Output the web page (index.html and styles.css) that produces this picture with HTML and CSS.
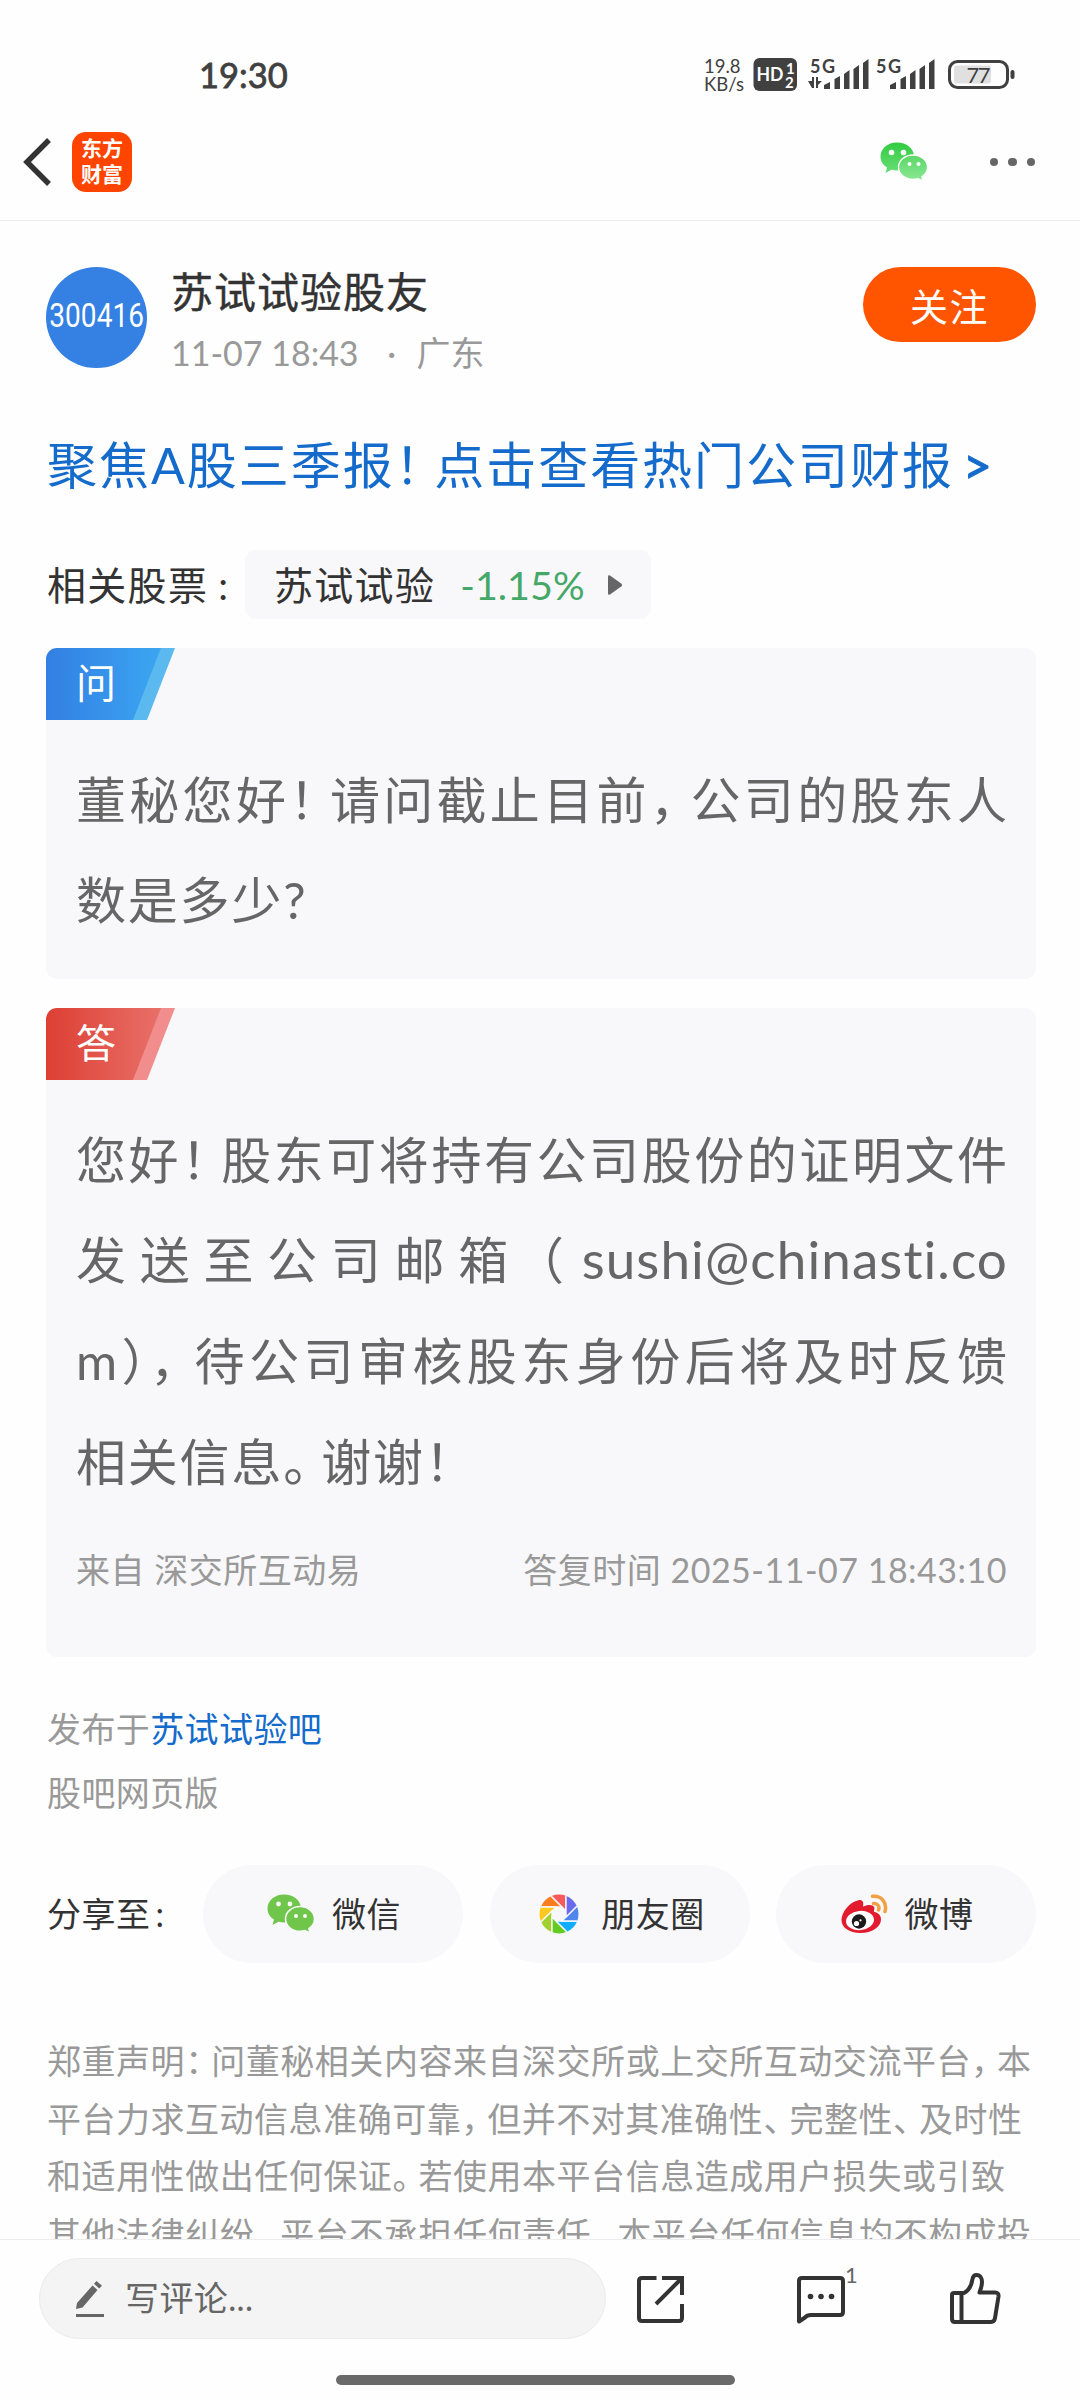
FILE: index.html
```html
<!DOCTYPE html>
<html lang="zh-CN">
<head>
    <meta charset="UTF-8">
    <meta name="viewport" content="width=device-width, initial-scale=1.0">
    <title>苏试试验股友</title>
    <link rel="stylesheet" href="styles.css">
</head>
<body>
    <div class="status-bar">
        <span class="time">19:30</span>
        <div class="signals">
            <div class="speed"><span>19.8</span><span>KB/s</span></div>
            <svg width="264" height="36" viewBox="48 0 264 36">
                <g fill="#404040">
                    <rect x="49.500" y="1" width="43.500" height="33" rx="6"/>
                    <text x="106" y="16" font-size="18" font-weight="bold" textLength="25">5G</text>
                    <path d="M104 24h4v-4h2v11h-2zM112 20h2v4h4l-4 4v3h-2z"/>
                    <path d="M120 32v-4l6-3v7zM130.500 32V22l5.500-3v13zM140 32V17l5.500-4v19zM149.500 32V12l5.500-4v24zM159 32V6l5.500-4v30z"/>
                    <text x="172" y="16" font-size="18" font-weight="bold" textLength="25">5G</text>
                    <path d="M186 32v-4l6-3v7zM196.500 32V22l5.500-3v13zM206 32V17l5.500-4v19zM215.500 32V12l5.500-4v24zM225 32V6l5.500-4v30z"/>
                    <rect x="306.500" y="13" width="4" height="9" rx="2"/>
                </g>
                <g fill="#fff" font-weight="bold">
                    <text x="52.500" y="24" font-size="19" textLength="27" lengthAdjust="spacingAndGlyphs">HD</text>
                    <text x="82" y="16.500" font-size="15">1</text>
                    <text x="81" y="31" font-size="15">2</text>
                </g>
                <rect x="245.500" y="4.500" width="58" height="26" rx="8" fill="none" stroke="#404040" stroke-width="3"/>
                <rect x="250" y="8.500" width="37" height="18" rx="3" fill="#e0e0e0"/>
                <text x="262.500" y="25.500" font-size="22" fill="#404040" textLength="24">77</text>
            </svg>
        </div>
    </div>

    <div class="nav-bar">
        <svg class="back" width="32" height="52" viewBox="0 0 32 52">
            <path d="M27 4L5 26L27 48" fill="none" stroke="#333" stroke-width="5.500"/>
        </svg>
        <div class="logo"><span>东方</span><span>财富</span></div>
        <svg class="nav-wechat" width="48" height="40" viewBox="0 0 48 40">
            <defs>
                <linearGradient id="green1" x1="0" y1="0" x2="0" y2="1">
                    <stop offset="0" stop-color="#2fcc3f"/><stop offset="1" stop-color="#6bdd78"/>
                </linearGradient>
                <linearGradient id="green2" x1="0" y1="0" x2="0" y2="1">
                    <stop offset="0" stop-color="#5bd766"/><stop offset="1" stop-color="#8be896"/>
                </linearGradient>
            </defs>
            <path fill="url(#green1)" d="M17 .5C7.500.5.5 6.800.5 14.500c0 4.800 2.500 8.500 6.500 11L5.500 31l6-3.200c2 .5 3.700.7 5.500.7 9.500 0 17-6 17-14S26.500.5 17 .5z"/>
            <path fill="url(#green2)" stroke="#fff" stroke-width="1.300" d="M33 13c-8 0-14.500 5.500-14.500 12.200S25 37.400 33 37.400c1.800 0 3.400-.2 5-.8l5.200 2.600-1.300-4.500c3.500-2.300 5.600-5.600 5.600-9.500C47.500 18.500 41 13 33 13z"/>
            <g fill="#fff"><circle cx="11.500" cy="10.500" r="2.800"/><circle cx="23.500" cy="10.500" r="2.800"/><circle cx="29.500" cy="22" r="2"/><circle cx="38.500" cy="22" r="2"/></g>
        </svg>
        <div class="dots"><i></i><i></i><i></i></div>
    </div>

    <main>
        <div class="author">
            <div class="avatar"><span>300416</span></div>
            <div class="author-info">
                <div class="name">苏试试验股友</div>
                <div class="date"><span>11-07 18:43</span><span class="dot">·</span><span>广东</span></div>
            </div>
            <button class="follow">关注</button>
        </div>

        <a class="headline">聚焦A股三季报<span class="pn">！</span>点击查看热门公司财报<span class="more">&gt;</span></a>

        <div class="stocks">
            <span class="stocks-label">相关股票<b>:</b></span>
            <div class="chip">
                <span class="stock-name">苏试试验</span>
                <span class="percent">-1.15%</span>
                <svg width="16" height="22" viewBox="0 0 16 22"><path d="M1 2.500Q1 .5 3 1.500L14.500 9.800Q16 11 14.500 12.200L3 20.500Q1 21.500 1 19.500z" fill="#666"/></svg>
            </div>
        </div>

        <section class="card question">
            <div class="tag">
                <svg width="129" height="72" viewBox="0 0 129 72">
                    <defs><linearGradient id="blue"><stop offset="0" stop-color="#337fe3"/><stop offset="1" stop-color="#3ba6f1"/></linearGradient></defs>
                    <path d="M100 0h29l-28 72H80z" fill="#5cb9f0"/>
                    <path d="M0 0h115L87 72H0z" fill="url(#blue)"/>
                </svg>
                <span>问</span>
            </div>
            <p class="text">
                <span class="line">董秘您好<span class="pn">！</span>请问截止目前<span class="pn">，</span>公司的股东人</span>
                <span class="line last">数是多少?</span>
            </p>
        </section>

        <section class="card answer">
            <div class="tag">
                <svg width="129" height="72" viewBox="0 0 129 72">
                    <defs><linearGradient id="red"><stop offset="0" stop-color="#dd3f33"/><stop offset="1" stop-color="#e87069"/></linearGradient></defs>
                    <path d="M100 0h29l-28 72H80z" fill="#f18d8d"/>
                    <path d="M0 0h115L87 72H0z" fill="url(#red)"/>
                </svg>
                <span>答</span>
            </div>
            <p class="text">
                <span class="line">您好<span class="pn">！</span>股东可将持有公司股份的证明文件</span>
                <span class="line">发送至公司邮箱<span class="open">（</span><span class="mail">sushi@chinasti.co</span></span>
                <span class="line">m<span class="bracket">）</span><span class="comma">，</span>待公司审核股东身份后将及时反馈</span>
                <span class="line last">相关信息<span class="pn">。</span>谢谢！</span>
            </p>
            <div class="source">
                <span>来自 深交所互动易</span>
                <span class="reply-time">答复时间 2025-11-07 18:43:10</span>
            </div>
        </section>

        <div class="publish">
            <div>发布于<a>苏试试验吧</a></div>
            <div>股吧网页版</div>
        </div>

        <div class="share">
            <span class="share-label">分享至<b>:</b></span>
            <div class="share-btn">
                <svg width="48" height="40" viewBox="0 0 48 40">
                    <path fill="#70c64b" d="M17 .5C7.500.5.5 6.800.5 14.500c0 4.800 2.500 8.500 6.500 11L5.500 31l6-3.200c2 .5 3.700.7 5.500.7 9.500 0 17-6 17-14S26.500.5 17 .5z"/>
                    <path fill="#70c64b" stroke="#f8f8fa" stroke-width="1.600" d="M33 12.500c-8 0-14.500 5.500-14.500 12.500S25 37.400 33 37.400c1.800 0 3.400-.2 5-.8l5.200 2.600-1.300-4.500c3.500-2.300 5.600-5.600 5.600-9.700C47.500 18 41 12.500 33 12.500z"/>
                    <g fill="#f8f8fa"><circle cx="11.500" cy="10" r="2.400"/><circle cx="23" cy="10" r="2.400"/><circle cx="29" cy="22" r="2"/><circle cx="38" cy="22" r="2"/></g>
                </svg>
                <span class="gap18">微信</span>
            </div>
            <div class="share-btn moments">
                <svg width="40" height="40" viewBox="-20 -20 40 40">
                    <defs><clipPath id="disc"><circle r="19.500"/></clipPath></defs>
                    <g clip-path="url(#disc)" stroke="#f8f8fa" stroke-width="1.400">
                        <path d="M7-2.900V-24H-14.100z" fill="#f65a5a"/>
                        <path d="M7-2.900V-24H-14.100z" fill="#fb7b1f" transform="rotate(-45)"/>
                        <path d="M7-2.900V-24H-14.100z" fill="#fdc81f" transform="rotate(-90)"/>
                        <path d="M7-2.900V-24H-14.100z" fill="#a1cf2b" transform="rotate(-135)"/>
                        <path d="M7-2.900V-24H-14.100z" fill="#63cc23" transform="rotate(180)"/>
                        <path d="M7-2.900V-24H-14.100z" fill="#0fadfb" transform="rotate(135)"/>
                        <path d="M7-2.900V-24H-14.100z" fill="#4f86ee" transform="rotate(90)"/>
                        <path d="M7-2.900V-24H-14.100z" fill="#6a6bec" transform="rotate(45)"/>
                    </g>
                </svg>
                <span class="gap23">朋友圈</span>
            </div>
            <div class="share-btn">
                <svg width="47" height="40" viewBox="0 0 47 40">
                    <path d="M.5 26C.5 18 9 7.500 17.500 6.200c4-.6 5.500 1.800 4.500 6.300 5-2.500 11-2 11.500 1.500 0 1.500-1 3-.5 3.800 4 1 7 3.200 7 7.700C40 33 31 39 19.500 39S.5 33.500.5 26z" fill="#e21b2e"/>
                    <ellipse cx="19" cy="26.500" rx="14" ry="9.600" fill="#fff" transform="rotate(-6 19 26.500)"/>
                    <circle cx="18" cy="27.500" r="7.200" fill="#1c1a1b"/>
                    <circle cx="15.500" cy="29.500" r="2.600" fill="#fff"/><circle cx="19.500" cy="26.300" r="1.100" fill="#fff"/>
                    <path d="M31.500 2.300C40 1 46.500 8.500 44 17.500M32.500 9.500c4-.5 6.500 3 5 6.500" fill="none" stroke="#f2a044" stroke-width="3.500" stroke-linecap="round"/>
                </svg>
                <span class="gap18">微博</span>
            </div>
        </div>

        <div class="disclaimer">
            <span class="line" style="width:984px">郑重声明<span class="pn">：</span>问董秘相关内容来自深交所或上交所互动交流平台<span class="pn">，</span>本</span>
            <span class="line" style="width:975px">平台力求互动信息准确可靠<span class="pn">，</span>但并不对其准确性<span class="pn">、</span>完整性<span class="pn">、</span>及时性</span>
            <span class="line" style="width:958px">和适用性做出任何保证<span class="pn">。</span>若使用本平台信息造成用户损失或引致</span>
            <span class="line" style="width:984px">其他法律纠纷<span class="pn">，</span>平台不承担任何责任<span class="pn">。</span>本平台任何信息均不构成投</span>
        </div>
    </main>

    <footer>
        <div class="actions">
            <div class="comment-input">
                <svg width="30" height="40" viewBox="0 0 30 40">
                    <path d="M2 24L17.500 6.500l5 4.500L7.500 28.500L1 30zM19 4.800L21.500 2l5.500 4.800l-2.800 2.700z" fill="#666"/>
                    <path d="M1 36.500h28" stroke="#666" stroke-width="3"/>
                </svg>
                <span>写评论...</span>
            </div>
            <svg class="ic-share" width="50" height="50" viewBox="0 0 50 50">
                <path d="M20.500 4H6Q3 4 3 7v37q0 3 3 3h37q3 0 3-3V30M26 4h20v17M46 4L20 30" fill="none" stroke="#333" stroke-width="4"/>
            </svg>
            <div class="comments">
                <svg width="52" height="50" viewBox="0 0 52 50">
                    <path d="M7 4h38q3 0 3 3v31q0 3-3 3H16q-4 0-6 2.500L4 47.500V7q0-3 3-3z" fill="none" stroke="#333" stroke-width="4" stroke-linejoin="round"/>
                    <g fill="#333"><circle cx="15.500" cy="22.500" r="2.800"/><circle cx="26" cy="22.500" r="2.800"/><circle cx="36.500" cy="22.500" r="2.800"/></g>
                </svg>
                <span class="count">1</span>
            </div>
            <svg class="ic-like" width="54" height="54" viewBox="0 0 54 54">
                <path d="M5 21h10q7-3.500 8.500-14c.5-3 2-4 4-4 4 0 5.500 4 5.500 7 0 4-1.500 7.500-2.500 10.500H46q4 0 3.500 4L46 46q-.6 4-4 4H6q-3 0-3-3V23q0-2 2-2zM12.500 21v29" fill="none" stroke="#333" stroke-width="4" stroke-linejoin="round"/>
            </svg>
        </div>
        <div class="home-bar"></div>
    </footer>
</body>
</html>
```
FILE: styles.css
```css
:root{
    --textcolor: #333;
    --gray: #999;
    --blue: #146bcb;
    --case: #f8f8fa;
}
*{
    box-sizing: border-box;
}
body {
    font-family: Lato, "Noto Sans CJK SC", sans-serif;
    background-color: #fefefe;
    color: var(--textcolor);
    margin: 0;
    width: 1080px;
    height: 2400px;
    display: flex;
    flex-direction: column;
    overflow: hidden;
}
svg {
    display: block;
    flex: none;
}
p {
    margin: 0;
}
b {
    font-weight: 400;
}

/* status bar */
.status-bar {
    height: 104px;
    padding: 57px 64px 0 199px;
    display: flex;
    justify-content: space-between;
}
.time {
    font-size: 34.500px;
    line-height: 36px;
    color: #404040;
    -webkit-text-stroke: 0.800px #404040;
}
.signals {
    display: flex;
}
.signals svg {
    overflow: visible;
}
.speed {
    width: 48px;
    font-size: 18.500px;
    line-height: 18px;
    color: #404040;
    white-space: nowrap;
}
.speed span {
    display: block;
}

/* nav */
.nav-bar {
    height: 117px;
    padding: 0 45px 0 22px;
    border-bottom: 1px solid #ececec;
    display: flex;
    align-items: center;
}
.logo {
    width: 60px;
    height: 60px;
    margin-left: 18px;
    border-radius: 14px;
    background: #ff4400;
    color: #fff;
    font-size: 21px;
    font-weight: 700;
    line-height: 26px;
    display: flex;
    flex-direction: column;
    align-items: center;
    justify-content: center;
}
.logo span {
    position: relative;
    top: -1px;
}
.nav-wechat {
    margin-left: auto;
}
.dots {
    margin-left: 62px;
    display: flex;
    gap: 10px;
}
.dots i {
    width: 8.500px;
    height: 8.500px;
    border-radius: 50%;
    background: #666;
}

main {
    flex: 1;
    min-height: 0;
    overflow: hidden;
    padding: 46px 44px 0 46px;
}

/* author */
.author {
    display: flex;
    align-items: flex-start;
    height: 101px;
}
.avatar {
    width: 101px;
    height: 101px;
    border-radius: 50%;
    background: #3480e3;
    color: #fff;
    display: flex;
    align-items: center;
    justify-content: center;
    font-family: Roboto, sans-serif;
    font-size: 33px;
}
.avatar span {
    transform: scaleX(0.85);
    margin-top: -4px;
}
.author-info {
    margin-left: 24px;
    flex: 1;
}
.name {
    font-size: 42px;
    line-height: 50px;
    letter-spacing: 1px;
    -webkit-text-stroke: 0.400px var(--textcolor);
}
.date {
    font-size: 34px;
    line-height: 50px;
    margin-top: 11px;
    color: var(--gray);
    display: flex;
}
.date .dot {
    width: 58px;
    text-align: center;
    padding-left: 8px;
}
.follow {
    width: 173px;
    height: 75px;
    border: none;
    border-radius: 38px;
    background: #ff5500;
    color: #fff;
    font: inherit;
    font-size: 38px;
    letter-spacing: 1.500px;
    padding: 0;
}

.headline {
    display: block;
    width: 945px;
    margin: 62px 0 0 1px;
    padding-bottom: 1px;
    font-size: 50px;
    line-height: 70px;
    color: var(--blue);
    text-align-last: justify;
    white-space: nowrap;
}
.headline .more {
    margin-left: 9px;
    -webkit-text-stroke: 1px var(--blue);
}
.pn {
    letter-spacing: -0.25em;
}
.open {
    margin-left: -8px;
    letter-spacing: 4px;
}
.bracket {
    letter-spacing: -0.02em;
}
.comma {
    letter-spacing: -0.2em;
}

/* stocks */
.stocks {
    margin-top: 49px;
    height: 69px;
    display: flex;
    align-items: center;
    font-size: 39px;
}
.stocks-label {
    width: 199px;
    padding: 0 0 3px 1px;
    letter-spacing: 1.300px;
}
.stocks-label b {
    margin-left: 10px;
}
.chip {
    width: 406px;
    height: 69px;
    padding-left: 29px;
    background: var(--case);
    border-radius: 11px;
    display: flex;
    align-items: center;
}
.stock-name {
    padding-bottom: 3px;
    letter-spacing: 1.300px;
}
.percent {
    margin-left: 25px;
    padding-bottom: 1px;
    width: 147px;
    font-size: 39.500px;
    color: #46a868;
}

/* cards */
.card {
    margin-top: 29px;
    background: var(--case);
    border-radius: 11px;
    overflow: hidden;
    color: #666;
}
.question {
    height: 331px;
}
.answer {
    height: 649px;
}
.tag {
    height: 72px;
    display: grid;
    align-items: center;
}
.tag svg, .tag span {
    grid-area: 1 / 1;
}
.tag span {
    padding: 0 0 6px 30px;
    font-size: 40px;
    color: #fff;
}
.text {
    padding: 29.500px 29px 0 30px;
    font-size: 50px;
    line-height: 100.700px;
}
.line {
    display: block;
    white-space: nowrap;
    text-align-last: justify;
}
.mail {
    font-size: 53px;
    line-height: 1;
    letter-spacing: 1.100px;
    margin-right: -1px;
}
.text .last {
    text-align-last: left;
    letter-spacing: 1.800px;
}
.text .last .pn {
    letter-spacing: -0.24em;
}
.source {
    margin: 33px 29px 0 30px;
    font-size: 34px;
    line-height: 50px;
    letter-spacing: 0.500px;
    color: var(--gray);
    display: flex;
    justify-content: space-between;
}

.publish {
    margin: 40px 0 0 1px;
    font-size: 34px;
    line-height: 64px;
    letter-spacing: 0.400px;
    color: var(--gray);
}
.publish a {
    color: var(--blue);
}

/* share */
.share {
    margin-top: 40px;
    display: flex;
    align-items: center;
    font-size: 34px;
    line-height: 50px;
    letter-spacing: 0.500px;
}
.share-label {
    width: 157px;
    padding-left: 1px;
}
.share-label b {
    margin-left: 5px;
}
.share-btn {
    width: 260px;
    height: 98px;
    padding-left: 2px;
    margin-right: 26.500px;
    border-radius: 49px;
    background: var(--case);
    display: flex;
    align-items: center;
    justify-content: center;
    flex: none;
}
.share-btn:last-child {
    margin-right: 0;
}
.moments {
    padding-left: 5px;
}
.gap18 {
    margin-left: 17px;
}
.gap23 {
    margin-left: 22px;
}

.disclaimer {
    margin: 69px 0 0 1px;
    font-size: 34px;
    line-height: 57.700px;
    color: var(--gray);
}

/* bottom bar */
footer {
    height: 161px;
    border-top: 1px solid #ececec;
    background: #fefefe;
}
.actions {
    height: 116px;
    padding: 1px 0 0 39px;
    display: flex;
    align-items: center;
}
.comment-input {
    width: 567px;
    height: 81px;
    padding-left: 35px;
    border: 1px solid #ebebeb;
    border-radius: 41px;
    background: #f4f4f4;
    color: #666;
    font-size: 34px;
    line-height: 50px;
    display: flex;
    align-items: center;
    gap: 20px;
}
.comment-input span {
    padding-bottom: 2px;
    letter-spacing: 0.400px;
}
.ic-share {
    margin-left: 30px;
}
.comments {
    position: relative;
    margin-left: 109px;
}
.count {
    position: absolute;
    left: 50px;
    top: -13px;
    font-size: 22px;
    line-height: 28px;
    color: #666;
}
.ic-like {
    margin-left: 102px;
}
.home-bar {
    width: 399px;
    height: 10px;
    margin: 19px 0 0 336px;
    border-radius: 5px;
    background: #6a6a6a;
}
```
